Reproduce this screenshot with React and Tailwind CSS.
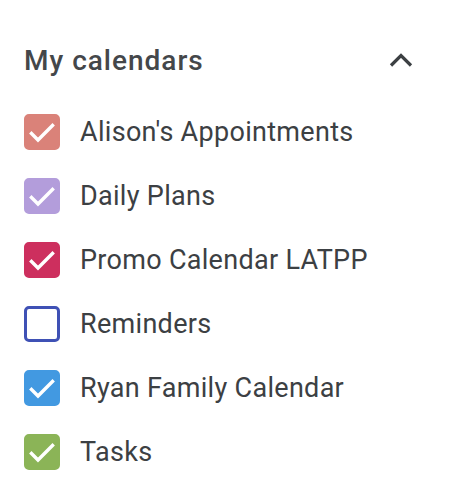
import { useState } from "react";

const calendars = [
  { name: "Alison's Appointments", color: "bg-[#da8279]", border: "border-[#da8279]", checked: true },
  { name: "Daily Plans", color: "bg-[#b39ddb]", border: "border-[#b39ddb]", checked: true },
  { name: "Promo Calendar LATPP", color: "bg-[#cd2f5e]", border: "border-[#cd2f5e]", checked: true },
  { name: "Reminders", color: "bg-[#3f51b5]", border: "border-[#3f51b5]", checked: false },
  { name: "Ryan Family Calendar", color: "bg-[#4299e1]", border: "border-[#4299e1]", checked: true },
  { name: "Tasks", color: "bg-[#8bb457]", border: "border-[#8bb457]", checked: true },
];

function Check({ item, onToggle }) {
  return (
    <button
      onClick={onToggle}
      className={`w-9 h-9 rounded-[5px] border-[3px] flex items-center justify-center shrink-0 ${item.border} ${
        item.checked ? item.color : "bg-white"
      }`}
    >
      {item.checked && (
        <svg width="30" height="30" viewBox="3 3 30 30" fill="none">
          <path d="M7.5 19.5l6.5 6.5L28.5 11.5" stroke="white" strokeWidth="3.4" strokeLinecap="square" />
        </svg>
      )}
    </button>
  );
}

export default function App() {
  const [items, setItems] = useState(calendars);

  const toggle = (i) =>
    setItems(items.map((c, j) => (j === i ? { ...c, checked: !c.checked } : c)));

  return (
    <div className="w-[462px] h-[490px] bg-white text-[#3c4043] font-['Roboto',sans-serif]">
      {/* header */}
      <div className="flex items-center justify-between pl-6 pr-[49px] pt-[44px] h-[83px]">
        <h2 className="text-[28px] font-medium text-[#44474a] tracking-[1px] leading-none pb-[6px]">
          My calendars
        </h2>
        <svg width="24" height="16" viewBox="0 0 24 16" fill="none" className="mb-[7px]">
          <path d="M2 13.5L12 3.5L22 13.5" stroke="#3c4043" strokeWidth="3.2" />
        </svg>
      </div>

      <ul className="flex flex-col pt-[17px]">
        {items.map((c, i) => (
          <li key={c.name} className="flex items-center h-16 pl-6 gap-5">
            <Check item={c} onToggle={() => toggle(i)} />
            <span className="text-[27px] tracking-[0.3px] leading-none">{c.name}</span>
          </li>
        ))}
      </ul>
    </div>
  );
}
